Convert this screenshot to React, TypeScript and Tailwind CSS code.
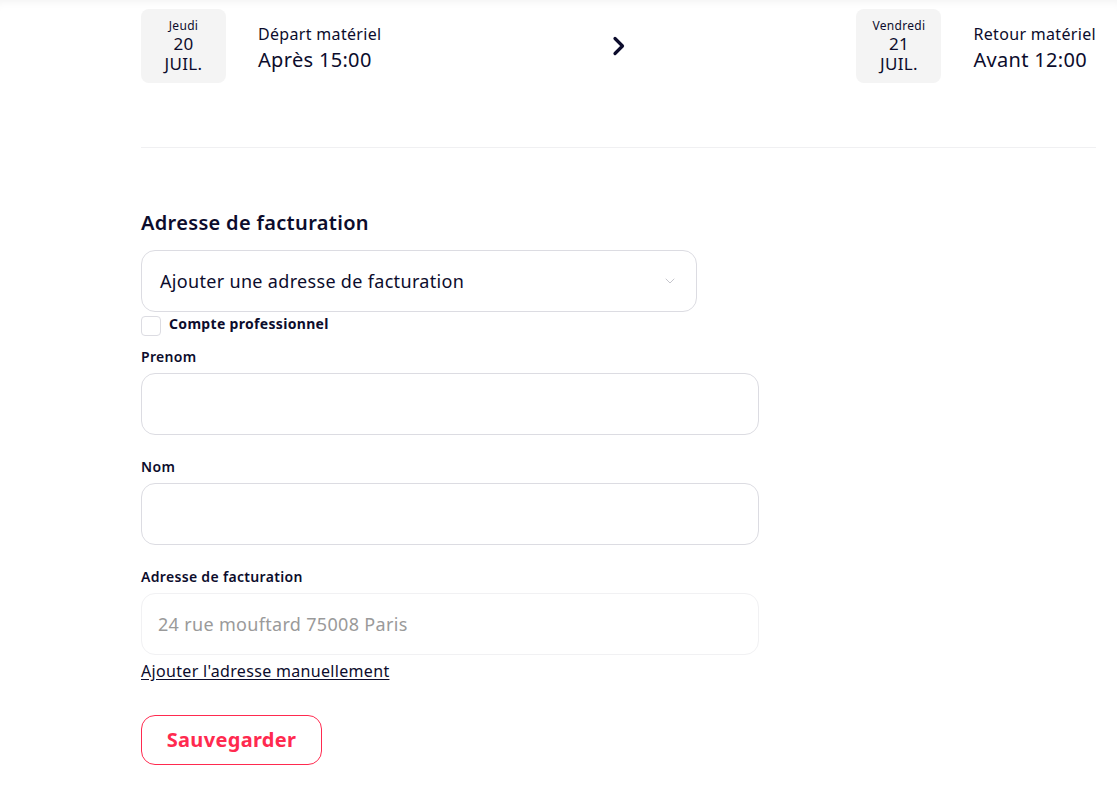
import { ChevronDown } from 'lucide-react';

const font = { fontFamily: '"Noto Sans", Lato, sans-serif', letterSpacing: '0.02em' };

function DateBox({ day, date, month }: { day: string; date: string; month: string }) {
  return (
    <div className="flex h-[74px] w-[85px] flex-col items-center justify-center rounded-lg bg-[#f4f4f4] text-center text-[#0c0c2c]">
      <span className="text-[12px] leading-[16px]">{day}</span>
      <span className="text-[17px] leading-[20px]">
        {date}
        <br />
        {month}
      </span>
    </div>
  );
}

function Slot({ title, time }: { title: string; time: string }) {
  return (
    <div className="flex flex-col pt-[4px] text-[#0c0c2c]">
      <span className="text-[16px] leading-[22px]">{title}</span>
      <span className="mt-[2px] text-[20px] leading-[26px]">{time}</span>
    </div>
  );
}

function Field({ label, placeholder, faint }: { label: string; placeholder?: string; faint?: boolean }) {
  return (
    <div className="flex flex-col">
      <label className="text-[14px] font-semibold leading-5 text-[#0c0c2c]">{label}</label>
      <input
        placeholder={placeholder}
        className={`mt-[6px] h-[62px] w-[618px] rounded-[14px] border bg-white px-4 text-[18px] outline-none placeholder:text-[#9a9a9a] ${
          faint ? 'border-[#f1f1f3]' : 'border-[#dcdce2]'
        }`}
      />
    </div>
  );
}

export default function App() {
  return (
    <div
      className="min-h-[785px] bg-white shadow-[inset_0_8px_8px_-6px_rgba(0,0,0,0.05)]"
      style={font}
    >
      <div className="ml-[141px] w-[955px] pt-[9px]">
        <div className="flex items-center justify-between">
          <div className="flex items-center gap-8">
            <DateBox day="Jeudi" date="20" month="JUIL." />
            <Slot title="Départ matériel" time="Après 15:00" />
          </div>
          <svg width="14" height="20" viewBox="0 0 14 20" fill="none" className="text-[#0c0c2c]">
            <path d="M3 2.5 L10.5 10 L3 17.5" stroke="currentColor" strokeWidth="3.2" strokeLinecap="round" strokeLinejoin="round" />
          </svg>
          <div className="flex items-center gap-8">
            <DateBox day="Vendredi" date="21" month="JUIL." />
            <Slot title="Retour matériel" time="Avant 12:00" />
          </div>
        </div>

        <div className="mt-[64px] border-t border-[#f0f0f2]" />

        <h2 className="mt-[61px] text-[20px] font-semibold leading-7 text-[#0c0c2c]">Adresse de facturation</h2>

        <button className="mt-[13px] flex h-[62px] w-[556px] items-center justify-between rounded-[14px] border border-[#dcdce2] bg-white pl-[18px] pr-[18px] text-left">
          <span className="text-[18px] text-[#0c0c2c]">Ajouter une adresse de facturation</span>
          <ChevronDown size={16} strokeWidth={1.2} className="text-[#b8b8c0]" />
        </button>

        <label className="mt-[4px] flex items-start gap-2">
          <span className="h-[20px] w-[20px] rounded border border-[#dcdce2] bg-white" />
          <span className="text-[14px] font-bold leading-4 text-[#0c0c2c]">Compte professionnel</span>
        </label>

        <div className="mt-[11px] flex flex-col gap-[22px]">
          <Field label="Prenom" />
          <Field label="Nom" />
          <div>
            <Field label="Adresse de facturation" placeholder="24 rue mouftard 75008 Paris" faint />
            <a href="#" className="mt-[4px] block text-[16px] leading-6 text-[#0c0c2c] underline underline-offset-2">
              Ajouter l'adresse manuellement
            </a>
          </div>
        </div>

        <button className="mt-[32px] h-[50px] w-[181px] rounded-[14px] border border-[#ff2a4f] text-[20px] font-bold text-[#ff2a4f]">
          Sauvegarder
        </button>
      </div>
    </div>
  );
}
